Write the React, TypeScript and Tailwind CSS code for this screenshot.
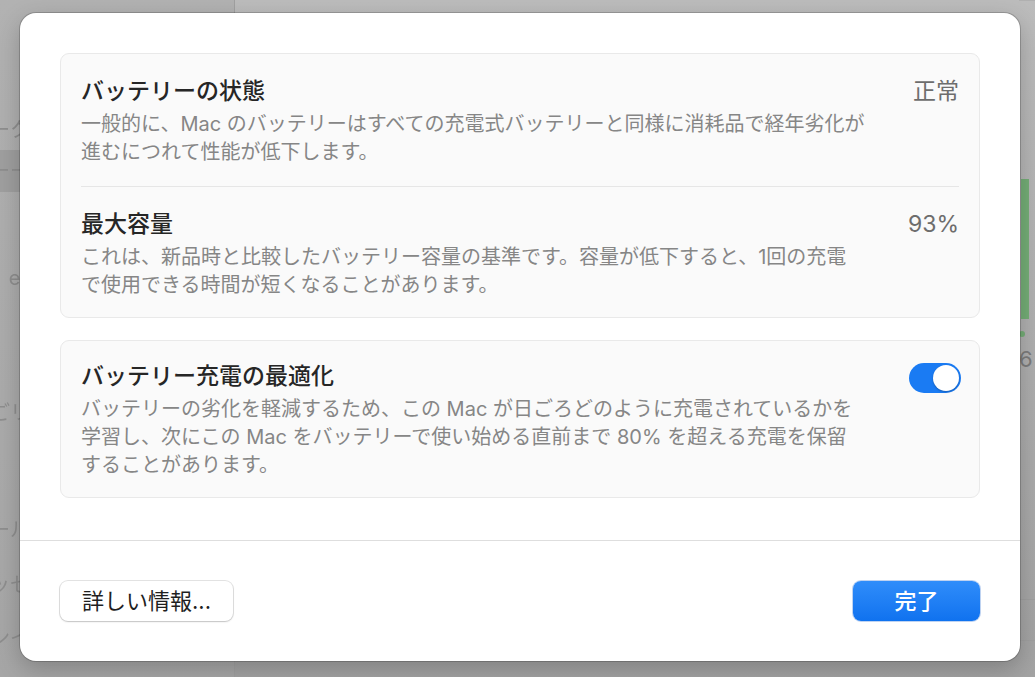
import React from "react";

function Toggle() {
  return (
    <div className="mt-[2px] mr-[-2px] flex h-[30px] w-[52px] shrink-0 items-center justify-end rounded-full bg-[#1a7bf3] p-[2px]">
      <div className="h-[26px] w-[26px] rounded-full bg-white shadow-[0_1px_2px_rgba(0,0,0,0.25)]" />
    </div>
  );
}

function SideRow({ text, className = "" }: { text: string; className?: string }) {
  return (
    <div className={"flex h-[28px] w-[30px] items-center justify-end whitespace-nowrap text-[20px] text-[#8e8e8e] blur-[0.5px] " + className}>
      {text}
    </div>
  );
}

function Section({
  title,
  lines,
  right,
  pt,
  pb,
}: {
  title: string;
  lines: string[];
  right: React.ReactNode;
  pt: string;
  pb: string;
}) {
  return (
    <div className={"flex justify-between " + pt + " " + pb}>
      <div>
        <div className="text-[23px] font-medium leading-[30px] text-[#262626]">{title}</div>
        <div className="mt-[4px] flex flex-col whitespace-nowrap text-[20px] leading-[28px] text-[#868686]">
          {lines.map((l) => (
            <span key={l}>{l}</span>
          ))}
        </div>
      </div>
      {right}
    </div>
  );
}

export default function App() {
  return (
    <div className="relative h-[677px] w-[1035px] overflow-hidden [font-family:Inter,'Noto_Sans_CJK_JP',sans-serif]">
      {/* window behind the sheet */}
      <div className="flex h-full w-full bg-linear-to-b from-[#bcbcbc] to-[#a3a3a3]">
        <div className="flex h-full w-[235px] shrink-0 flex-col border-r border-[#a0a0a0] bg-linear-to-b from-[#b2b2b2] to-[#a6a6a6] pt-[71px]">
          <SideRow text="ll" />
          <SideRow text="ーク" className="mt-[17px]" />
          <div className="mt-[6px] flex h-[42px] items-center bg-[#9f9f9f]">
            <SideRow text="ーー" />
          </div>
          <SideRow text="ell" className="mt-[72px]" />
          <SideRow text="ごリ" className="mt-[107px]" />
          <SideRow text="ール" className="mt-[89px]" />
          <SideRow text="ッセ" className="mt-[27px]" />
          <SideRow text="ンイ" className="mt-[25px]" />
        </div>
        <div className="flex flex-1 justify-end">
          <div className="flex w-[16px] flex-col border-t border-[#b0b0b0] pt-[178px]">
            <div className="ml-[2px] h-[140px] w-[8px] bg-[#74ad76]" />
            <div className="mt-[12px] h-[6px] w-[6px] rounded-full bg-[#74ad76]" />
            <div className="mt-[8px] text-[22px] leading-[28px] text-[#7c7c7c]">6</div>
            <div className="mt-[226px] h-px bg-[#a0a0a0]" />
            <div className="mt-[40px] h-px bg-[#a0a0a0]" />
          </div>
        </div>
      </div>

      {/* sheet overlay */}
      <div className="absolute left-[20px] top-[13px] flex h-[648px] w-[1000px] flex-col rounded-[16px] bg-white shadow-[0_0_0_1px_rgba(0,0,0,0.18),0_8px_24px_rgba(0,0,0,0.22)]">
        <div className="flex flex-col gap-[22px] px-[40px] pt-[40px]">
          <div className="rounded-[9px] border border-[#e9e9e9] bg-[#fafafa] px-[20px]">
            <Section
              title="バッテリーの状態"
              lines={[
                "一般的に、Mac のバッテリーはすべての充電式バッテリーと同様に消耗品で経年劣化が",
                "進むにつれて性能が低下します。",
              ]}
              right={<div className="text-[23px] leading-[30px] text-[#6d6d6d]">正常</div>}
              pt="pt-[22px]"
              pb="pb-[20px]"
            />
            <div className="h-px bg-[#e6e6e6]" />
            <Section
              title="最大容量"
              lines={[
                "これは、新品時と比較したバッテリー容量の基準です。容量が低下すると、1回の充電",
                "で使用できる時間が短くなることがあります。",
              ]}
              right={<div className="text-[23px] leading-[30px] text-[#6d6d6d]">93%</div>}
              pt="pt-[22px]"
              pb="pb-[18px]"
            />
          </div>

          <div className="rounded-[9px] border border-[#e9e9e9] bg-[#fafafa] px-[20px]">
            <Section
              title="バッテリー充電の最適化"
              lines={[
                "バッテリーの劣化を軽減するため、この Mac が日ごろどのように充電されているかを",
                "学習し、次にこの Mac をバッテリーで使い始める直前まで 80% を超える充電を保留",
                "することがあります。",
              ]}
              right={<Toggle />}
              pt="pt-[20px]"
              pb="pb-[18px]"
            />
          </div>
        </div>

        <div className="mt-[42px] h-px bg-[#dedede]" />

        <div className="flex items-center justify-between px-[40px] pt-[40px]">
          <button className="flex h-[40px] w-[173px] items-center justify-center rounded-[8px] bg-white text-[22px] text-[#1f1f1f] shadow-[0_0_0_1px_rgba(0,0,0,0.11),0_1px_2px_rgba(0,0,0,0.14)]">
            詳しい情報...
          </button>
          <button className="flex h-[40px] w-[127px] items-center justify-center rounded-[8px] bg-linear-to-b from-[#2f8dfa] to-[#0f72ef] text-[22px] font-medium text-white shadow-[0_0_0_1px_rgba(0,80,200,0.25)]">
            完了
          </button>
        </div>
      </div>
    </div>
  );
}
